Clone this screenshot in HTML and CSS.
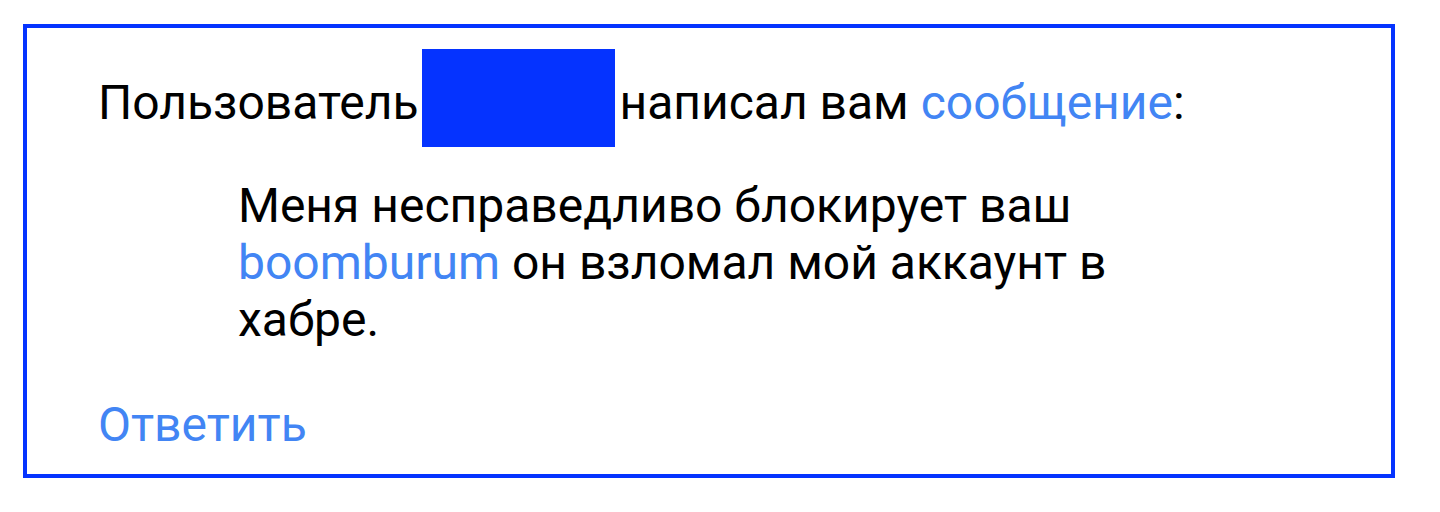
FILE: index.html
```html
<!DOCTYPE html>
<html lang="ru">
<head>
<meta charset="utf-8">
<link rel="stylesheet" href="styles.css">
</head>
<body>
<div class="card">
  <p class="head">Пользователь<span class="redact"></span>написал вам <a class="link" href="#">сообщение</a>:</p>
  <p class="msg">Меня несправедливо блокирует ваш <a class="link" href="#">boomburum</a> он взломал мой аккаунт в хабре.</p>
  <a class="link reply" href="#">Ответить</a>
</div>
</body>
</html>
```

FILE: styles.css
```css
html, body {
  margin: 0;
  padding: 0;
  background: #ffffff;
}
body {
  font-family: Roboto, "Noto Sans", sans-serif;
  font-size: 48px;
  color: #000000;
}
.card {
  margin: 24px 0 0 23px;
  width: 1293px;
  height: 446px;
  border: 4px solid #0533ff;
  padding: 0 0 0 71px;
  box-sizing: content-box;
}
.head {
  margin: 0;
  padding-top: 21px;
  line-height: 56px;
  display: flex;
  align-items: center;
  white-space: pre;
}
.redact {
  display: inline-block;
  width: 193px;
  height: 98px;
  background: #0533ff;
  margin: 0 4px 9px;
}
.link {
  color: #4285f4;
  text-decoration: none;
}
.msg {
  margin: 0;
  padding: 21px 0 0 140px;
  width: 920px;
  line-height: 57px;
}
.reply {
  display: inline-block;
  margin-top: 49px;
  line-height: 56px;
}
```
